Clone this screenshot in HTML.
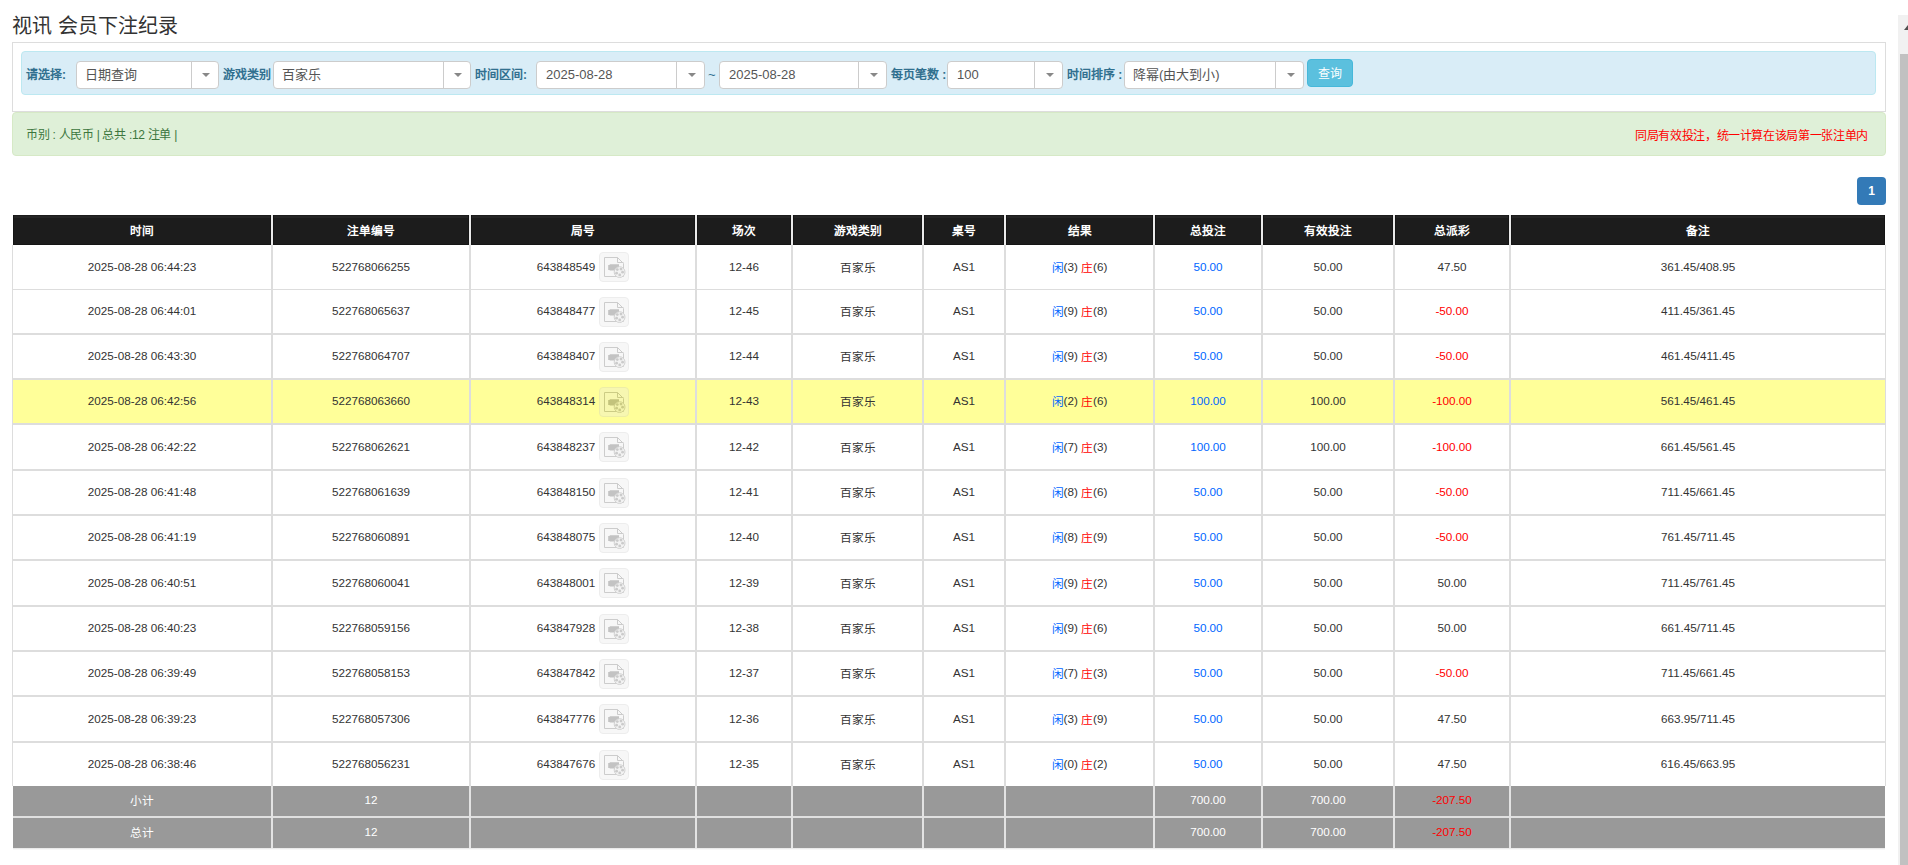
<!DOCTYPE html><html lang="zh-CN"><head><meta charset="utf-8"><style>
*{box-sizing:border-box}
html,body{margin:0;padding:0;background:#fff;width:1908px;height:865px;overflow:hidden;position:relative}
body{font-family:"Liberation Sans", sans-serif;color:#333}
.a{position:absolute}
.c{position:absolute;display:flex;align-items:center;justify-content:center;padding-bottom:2px;white-space:nowrap;font-size:11.7px;color:#333}
.sel{position:absolute;top:61px;height:28px;background:#fff;border:1px solid #ccc;border-radius:4px}
.sel .t{position:absolute;left:8px;top:0;line-height:26px;font-size:13px;color:#555;white-space:nowrap}
.sel .d{position:absolute;top:0;bottom:0;width:1px;background:#ccc}
.sel .ar{position:absolute;top:11px;width:0;height:0;border-left:4px solid transparent;border-right:4px solid transparent;border-top:4.5px solid #888}
.lb{position:absolute;top:61px;line-height:28px;font-size:12px;font-weight:bold;color:#31708f;white-space:nowrap}
.hl{position:absolute;background:#ddd}
.vl{position:absolute;width:2px;background:#ddd}
.ib{display:inline-block;width:30px;height:30px;margin-left:4px;position:relative;opacity:0.3;margin-top:2px}
.ib .bx{position:absolute;left:0;top:0;width:30px;height:30px;border:1px solid #c4c4c4;border-radius:4px;background:#e8e8e8}
.ib svg{position:absolute;left:0;top:0}
.blue{color:#0066ff}.red{color:#ff0000}

</style></head><body>
<div class="a" style="left:12px;top:13px;font-size:20px;line-height:26px;color:#333;white-space:nowrap">视讯 会员下注纪录</div>
<div class="a" style="left:12px;top:42px;width:1874px;height:70px;border:1px solid #ddd;background:#fff"></div>
<div class="a" style="left:21px;top:51px;width:1855px;height:44px;background:#d9edf7;border:1px solid #bce8f1;border-radius:4px"></div>
<div class="lb" style="left:26px">请选择:</div>
<div class="sel" style="left:76px;width:143px"><div class="t" style="left:8px">日期查询</div><div class="d" style="left:114px"></div><div class="ar" style="left:125px"></div></div>
<div class="lb" style="left:223px">游戏类别</div>
<div class="sel" style="left:273px;width:198px"><div class="t" style="left:8px">百家乐</div><div class="d" style="left:169px"></div><div class="ar" style="left:180px"></div></div>
<div class="lb" style="left:475px">时间区间:</div>
<div class="sel" style="left:536px;width:169px"><div class="t" style="left:9px">2025-08-28</div><div class="d" style="left:139px"></div><div class="ar" style="left:151px"></div></div>
<div class="a" style="left:708px;top:61px;line-height:28px;font-size:13px;color:#31708f">~</div>
<div class="sel" style="left:719px;width:168px"><div class="t" style="left:9px">2025-08-28</div><div class="d" style="left:138px"></div><div class="ar" style="left:150px"></div></div>
<div class="lb" style="left:891px">每页笔数 :</div>
<div class="sel" style="left:947px;width:116px"><div class="t" style="left:9px">100</div><div class="d" style="left:86px"></div><div class="ar" style="left:98px"></div></div>
<div class="lb" style="left:1067px">时间排序 :</div>
<div class="sel" style="left:1124px;width:180px"><div class="t" style="left:8px">降幂(由大到小)</div><div class="d" style="left:150px"></div><div class="ar" style="left:162px"></div></div>
<div class="a" style="left:1307px;top:59px;width:46px;height:28px;background:#5bc0de;border:1px solid #46b8da;border-radius:4px;color:#fff;font-size:12px;line-height:28px;text-align:center">查询</div>
<div class="a" style="left:12px;top:112px;width:1874px;height:44px;background:#dff0d8;border:1px solid #d6e9c6;border-radius:4px"></div>
<div class="a" style="left:26px;top:113px;line-height:44px;font-size:12px;letter-spacing:-0.3px;color:#3c763d;white-space:nowrap">币别 : 人民币 | 总共 :12 注单 |</div>
<div class="a" style="right:40px;top:114px;line-height:44px;font-size:12px;letter-spacing:-0.35px;color:#ff0000;white-space:nowrap">同局有效投注，统一计算在该局第一张注单内</div>
<div class="a" style="left:1857px;top:177px;width:29px;height:28px;background:#337ab7;border-radius:4px;color:#fff;font-size:12px;font-weight:bold;line-height:28px;text-align:center">1</div>
<div class="a" style="left:13px;top:215px;width:1872px;height:30px;background:#1c1c1c"></div>
<div class="a" style="left:13px;top:215px;width:1872px;height:30px;border:1px solid #151515;border-top:0"></div>
<div class="a" style="left:14px;top:216px;width:1870px;height:2px;background:#252525"></div>
<div class="c" style="left:13px;top:215px;width:258px;height:30px;color:#fff;font-weight:bold">时间</div>
<div class="c" style="left:273px;top:215px;width:196px;height:30px;color:#fff;font-weight:bold">注单编号</div>
<div class="c" style="left:471px;top:215px;width:224px;height:30px;color:#fff;font-weight:bold">局号</div>
<div class="c" style="left:697px;top:215px;width:94px;height:30px;color:#fff;font-weight:bold">场次</div>
<div class="c" style="left:793px;top:215px;width:129px;height:30px;color:#fff;font-weight:bold">游戏类别</div>
<div class="c" style="left:924px;top:215px;width:80px;height:30px;color:#fff;font-weight:bold">桌号</div>
<div class="c" style="left:1006px;top:215px;width:147px;height:30px;color:#fff;font-weight:bold">结果</div>
<div class="c" style="left:1155px;top:215px;width:106px;height:30px;color:#fff;font-weight:bold">总投注</div>
<div class="c" style="left:1263px;top:215px;width:130px;height:30px;color:#fff;font-weight:bold">有效投注</div>
<div class="c" style="left:1395px;top:215px;width:114px;height:30px;color:#fff;font-weight:bold">总派彩</div>
<div class="c" style="left:1511px;top:215px;width:374px;height:30px;color:#fff;font-weight:bold">备注</div>
<div class="a" style="left:270px;top:215px;width:4px;height:30px;border-left:1px solid #151515;border-right:1px solid #151515"></div>
<div class="a" style="left:271px;top:215px;width:2px;height:30px;background:#eaeaea"></div>
<div class="a" style="left:468px;top:215px;width:4px;height:30px;border-left:1px solid #151515;border-right:1px solid #151515"></div>
<div class="a" style="left:469px;top:215px;width:2px;height:30px;background:#eaeaea"></div>
<div class="a" style="left:694px;top:215px;width:4px;height:30px;border-left:1px solid #151515;border-right:1px solid #151515"></div>
<div class="a" style="left:695px;top:215px;width:2px;height:30px;background:#eaeaea"></div>
<div class="a" style="left:790px;top:215px;width:4px;height:30px;border-left:1px solid #151515;border-right:1px solid #151515"></div>
<div class="a" style="left:791px;top:215px;width:2px;height:30px;background:#eaeaea"></div>
<div class="a" style="left:921px;top:215px;width:4px;height:30px;border-left:1px solid #151515;border-right:1px solid #151515"></div>
<div class="a" style="left:922px;top:215px;width:2px;height:30px;background:#eaeaea"></div>
<div class="a" style="left:1003px;top:215px;width:4px;height:30px;border-left:1px solid #151515;border-right:1px solid #151515"></div>
<div class="a" style="left:1004px;top:215px;width:2px;height:30px;background:#eaeaea"></div>
<div class="a" style="left:1152px;top:215px;width:4px;height:30px;border-left:1px solid #151515;border-right:1px solid #151515"></div>
<div class="a" style="left:1153px;top:215px;width:2px;height:30px;background:#eaeaea"></div>
<div class="a" style="left:1260px;top:215px;width:4px;height:30px;border-left:1px solid #151515;border-right:1px solid #151515"></div>
<div class="a" style="left:1261px;top:215px;width:2px;height:30px;background:#eaeaea"></div>
<div class="a" style="left:1392px;top:215px;width:4px;height:30px;border-left:1px solid #151515;border-right:1px solid #151515"></div>
<div class="a" style="left:1393px;top:215px;width:2px;height:30px;background:#eaeaea"></div>
<div class="a" style="left:1508px;top:215px;width:4px;height:30px;border-left:1px solid #151515;border-right:1px solid #151515"></div>
<div class="a" style="left:1509px;top:215px;width:2px;height:30px;background:#eaeaea"></div>
<div class="a" style="left:13px;top:245px;width:1872px;height:44px;background:#fff"></div>
<div class="c" style="left:13px;top:245px;width:258px;height:44px">2025-08-28 06:44:23</div>
<div class="c" style="left:273px;top:245px;width:196px;height:44px">522768066255</div>
<div class="c" style="left:471px;top:245px;width:224px;height:44px">643848549<span class="ib"><span class="bx"></span><svg width="30" height="30" viewBox="0 0 30 30"><path d="M5.5 5.5H18.5L24.5 11.5V24.5H5.5Z" fill="#e6e6e6" stroke="#5a5a5a" stroke-width="1"/><path d="M18.5 5.5V10.5H24.5" fill="none" stroke="#5a5a5a"/><path d="M9.2 13H10.7V12.2H20V18.5H10.7V18.1H9.2Z" fill="#3c3c3c"/><circle cx="20.6" cy="20.1" r="5.4" fill="#d8d8d8" stroke="#6a6a6a" stroke-width="1"/><circle cx="18.3" cy="17.6" r="1.4" fill="#555"/><circle cx="22.0" cy="17.1" r="1.4" fill="#555"/><circle cx="23.6" cy="20.2" r="1.4" fill="#555"/><circle cx="20.7" cy="22.9" r="1.4" fill="#555"/><circle cx="17.6" cy="21.2" r="1.4" fill="#555"/></svg></span></div>
<div class="c" style="left:697px;top:245px;width:94px;height:44px">12-46</div>
<div class="c" style="left:793px;top:245px;width:129px;height:44px">百家乐</div>
<div class="c" style="left:924px;top:245px;width:80px;height:44px">AS1</div>
<div class="c" style="left:1006px;top:245px;width:147px;height:44px"><span class="blue">闲</span>(3)&nbsp;<span class="red">庄</span>(6)</div>
<div class="c" style="left:1155px;top:245px;width:106px;height:44px"><span class="blue">50.00</span></div>
<div class="c" style="left:1263px;top:245px;width:130px;height:44px">50.00</div>
<div class="c" style="left:1395px;top:245px;width:114px;height:44px">47.50</div>
<div class="c" style="left:1511px;top:245px;width:374px;height:44px">361.45/408.95</div>
<div class="a" style="left:13px;top:290px;width:1872px;height:43px;background:#fff"></div>
<div class="c" style="left:13px;top:290px;width:258px;height:43px">2025-08-28 06:44:01</div>
<div class="c" style="left:273px;top:290px;width:196px;height:43px">522768065637</div>
<div class="c" style="left:471px;top:290px;width:224px;height:43px">643848477<span class="ib"><span class="bx"></span><svg width="30" height="30" viewBox="0 0 30 30"><path d="M5.5 5.5H18.5L24.5 11.5V24.5H5.5Z" fill="#e6e6e6" stroke="#5a5a5a" stroke-width="1"/><path d="M18.5 5.5V10.5H24.5" fill="none" stroke="#5a5a5a"/><path d="M9.2 13H10.7V12.2H20V18.5H10.7V18.1H9.2Z" fill="#3c3c3c"/><circle cx="20.6" cy="20.1" r="5.4" fill="#d8d8d8" stroke="#6a6a6a" stroke-width="1"/><circle cx="18.3" cy="17.6" r="1.4" fill="#555"/><circle cx="22.0" cy="17.1" r="1.4" fill="#555"/><circle cx="23.6" cy="20.2" r="1.4" fill="#555"/><circle cx="20.7" cy="22.9" r="1.4" fill="#555"/><circle cx="17.6" cy="21.2" r="1.4" fill="#555"/></svg></span></div>
<div class="c" style="left:697px;top:290px;width:94px;height:43px">12-45</div>
<div class="c" style="left:793px;top:290px;width:129px;height:43px">百家乐</div>
<div class="c" style="left:924px;top:290px;width:80px;height:43px">AS1</div>
<div class="c" style="left:1006px;top:290px;width:147px;height:43px"><span class="blue">闲</span>(9)&nbsp;<span class="red">庄</span>(8)</div>
<div class="c" style="left:1155px;top:290px;width:106px;height:43px"><span class="blue">50.00</span></div>
<div class="c" style="left:1263px;top:290px;width:130px;height:43px">50.00</div>
<div class="c" style="left:1395px;top:290px;width:114px;height:43px"><span class="red">-50.00</span></div>
<div class="c" style="left:1511px;top:290px;width:374px;height:43px">411.45/361.45</div>
<div class="a" style="left:13px;top:335px;width:1872px;height:43px;background:#fff"></div>
<div class="c" style="left:13px;top:335px;width:258px;height:43px">2025-08-28 06:43:30</div>
<div class="c" style="left:273px;top:335px;width:196px;height:43px">522768064707</div>
<div class="c" style="left:471px;top:335px;width:224px;height:43px">643848407<span class="ib"><span class="bx"></span><svg width="30" height="30" viewBox="0 0 30 30"><path d="M5.5 5.5H18.5L24.5 11.5V24.5H5.5Z" fill="#e6e6e6" stroke="#5a5a5a" stroke-width="1"/><path d="M18.5 5.5V10.5H24.5" fill="none" stroke="#5a5a5a"/><path d="M9.2 13H10.7V12.2H20V18.5H10.7V18.1H9.2Z" fill="#3c3c3c"/><circle cx="20.6" cy="20.1" r="5.4" fill="#d8d8d8" stroke="#6a6a6a" stroke-width="1"/><circle cx="18.3" cy="17.6" r="1.4" fill="#555"/><circle cx="22.0" cy="17.1" r="1.4" fill="#555"/><circle cx="23.6" cy="20.2" r="1.4" fill="#555"/><circle cx="20.7" cy="22.9" r="1.4" fill="#555"/><circle cx="17.6" cy="21.2" r="1.4" fill="#555"/></svg></span></div>
<div class="c" style="left:697px;top:335px;width:94px;height:43px">12-44</div>
<div class="c" style="left:793px;top:335px;width:129px;height:43px">百家乐</div>
<div class="c" style="left:924px;top:335px;width:80px;height:43px">AS1</div>
<div class="c" style="left:1006px;top:335px;width:147px;height:43px"><span class="blue">闲</span>(9)&nbsp;<span class="red">庄</span>(3)</div>
<div class="c" style="left:1155px;top:335px;width:106px;height:43px"><span class="blue">50.00</span></div>
<div class="c" style="left:1263px;top:335px;width:130px;height:43px">50.00</div>
<div class="c" style="left:1395px;top:335px;width:114px;height:43px"><span class="red">-50.00</span></div>
<div class="c" style="left:1511px;top:335px;width:374px;height:43px">461.45/411.45</div>
<div class="a" style="left:13px;top:380px;width:1872px;height:43px;background:#ffff99"></div>
<div class="c" style="left:13px;top:380px;width:258px;height:43px">2025-08-28 06:42:56</div>
<div class="c" style="left:273px;top:380px;width:196px;height:43px">522768063660</div>
<div class="c" style="left:471px;top:380px;width:224px;height:43px">643848314<span class="ib"><span class="bx"></span><svg width="30" height="30" viewBox="0 0 30 30"><path d="M5.5 5.5H18.5L24.5 11.5V24.5H5.5Z" fill="#e6e6e6" stroke="#5a5a5a" stroke-width="1"/><path d="M18.5 5.5V10.5H24.5" fill="none" stroke="#5a5a5a"/><path d="M9.2 13H10.7V12.2H20V18.5H10.7V18.1H9.2Z" fill="#3c3c3c"/><circle cx="20.6" cy="20.1" r="5.4" fill="#d8d8d8" stroke="#6a6a6a" stroke-width="1"/><circle cx="18.3" cy="17.6" r="1.4" fill="#555"/><circle cx="22.0" cy="17.1" r="1.4" fill="#555"/><circle cx="23.6" cy="20.2" r="1.4" fill="#555"/><circle cx="20.7" cy="22.9" r="1.4" fill="#555"/><circle cx="17.6" cy="21.2" r="1.4" fill="#555"/></svg></span></div>
<div class="c" style="left:697px;top:380px;width:94px;height:43px">12-43</div>
<div class="c" style="left:793px;top:380px;width:129px;height:43px">百家乐</div>
<div class="c" style="left:924px;top:380px;width:80px;height:43px">AS1</div>
<div class="c" style="left:1006px;top:380px;width:147px;height:43px"><span class="blue">闲</span>(2)&nbsp;<span class="red">庄</span>(6)</div>
<div class="c" style="left:1155px;top:380px;width:106px;height:43px"><span class="blue">100.00</span></div>
<div class="c" style="left:1263px;top:380px;width:130px;height:43px">100.00</div>
<div class="c" style="left:1395px;top:380px;width:114px;height:43px"><span class="red">-100.00</span></div>
<div class="c" style="left:1511px;top:380px;width:374px;height:43px">561.45/461.45</div>
<div class="a" style="left:13px;top:425px;width:1872px;height:44px;background:#fff"></div>
<div class="c" style="left:13px;top:425px;width:258px;height:44px">2025-08-28 06:42:22</div>
<div class="c" style="left:273px;top:425px;width:196px;height:44px">522768062621</div>
<div class="c" style="left:471px;top:425px;width:224px;height:44px">643848237<span class="ib"><span class="bx"></span><svg width="30" height="30" viewBox="0 0 30 30"><path d="M5.5 5.5H18.5L24.5 11.5V24.5H5.5Z" fill="#e6e6e6" stroke="#5a5a5a" stroke-width="1"/><path d="M18.5 5.5V10.5H24.5" fill="none" stroke="#5a5a5a"/><path d="M9.2 13H10.7V12.2H20V18.5H10.7V18.1H9.2Z" fill="#3c3c3c"/><circle cx="20.6" cy="20.1" r="5.4" fill="#d8d8d8" stroke="#6a6a6a" stroke-width="1"/><circle cx="18.3" cy="17.6" r="1.4" fill="#555"/><circle cx="22.0" cy="17.1" r="1.4" fill="#555"/><circle cx="23.6" cy="20.2" r="1.4" fill="#555"/><circle cx="20.7" cy="22.9" r="1.4" fill="#555"/><circle cx="17.6" cy="21.2" r="1.4" fill="#555"/></svg></span></div>
<div class="c" style="left:697px;top:425px;width:94px;height:44px">12-42</div>
<div class="c" style="left:793px;top:425px;width:129px;height:44px">百家乐</div>
<div class="c" style="left:924px;top:425px;width:80px;height:44px">AS1</div>
<div class="c" style="left:1006px;top:425px;width:147px;height:44px"><span class="blue">闲</span>(7)&nbsp;<span class="red">庄</span>(3)</div>
<div class="c" style="left:1155px;top:425px;width:106px;height:44px"><span class="blue">100.00</span></div>
<div class="c" style="left:1263px;top:425px;width:130px;height:44px">100.00</div>
<div class="c" style="left:1395px;top:425px;width:114px;height:44px"><span class="red">-100.00</span></div>
<div class="c" style="left:1511px;top:425px;width:374px;height:44px">661.45/561.45</div>
<div class="a" style="left:13px;top:471px;width:1872px;height:43px;background:#fff"></div>
<div class="c" style="left:13px;top:471px;width:258px;height:43px">2025-08-28 06:41:48</div>
<div class="c" style="left:273px;top:471px;width:196px;height:43px">522768061639</div>
<div class="c" style="left:471px;top:471px;width:224px;height:43px">643848150<span class="ib"><span class="bx"></span><svg width="30" height="30" viewBox="0 0 30 30"><path d="M5.5 5.5H18.5L24.5 11.5V24.5H5.5Z" fill="#e6e6e6" stroke="#5a5a5a" stroke-width="1"/><path d="M18.5 5.5V10.5H24.5" fill="none" stroke="#5a5a5a"/><path d="M9.2 13H10.7V12.2H20V18.5H10.7V18.1H9.2Z" fill="#3c3c3c"/><circle cx="20.6" cy="20.1" r="5.4" fill="#d8d8d8" stroke="#6a6a6a" stroke-width="1"/><circle cx="18.3" cy="17.6" r="1.4" fill="#555"/><circle cx="22.0" cy="17.1" r="1.4" fill="#555"/><circle cx="23.6" cy="20.2" r="1.4" fill="#555"/><circle cx="20.7" cy="22.9" r="1.4" fill="#555"/><circle cx="17.6" cy="21.2" r="1.4" fill="#555"/></svg></span></div>
<div class="c" style="left:697px;top:471px;width:94px;height:43px">12-41</div>
<div class="c" style="left:793px;top:471px;width:129px;height:43px">百家乐</div>
<div class="c" style="left:924px;top:471px;width:80px;height:43px">AS1</div>
<div class="c" style="left:1006px;top:471px;width:147px;height:43px"><span class="blue">闲</span>(8)&nbsp;<span class="red">庄</span>(6)</div>
<div class="c" style="left:1155px;top:471px;width:106px;height:43px"><span class="blue">50.00</span></div>
<div class="c" style="left:1263px;top:471px;width:130px;height:43px">50.00</div>
<div class="c" style="left:1395px;top:471px;width:114px;height:43px"><span class="red">-50.00</span></div>
<div class="c" style="left:1511px;top:471px;width:374px;height:43px">711.45/661.45</div>
<div class="a" style="left:13px;top:516px;width:1872px;height:43px;background:#fff"></div>
<div class="c" style="left:13px;top:516px;width:258px;height:43px">2025-08-28 06:41:19</div>
<div class="c" style="left:273px;top:516px;width:196px;height:43px">522768060891</div>
<div class="c" style="left:471px;top:516px;width:224px;height:43px">643848075<span class="ib"><span class="bx"></span><svg width="30" height="30" viewBox="0 0 30 30"><path d="M5.5 5.5H18.5L24.5 11.5V24.5H5.5Z" fill="#e6e6e6" stroke="#5a5a5a" stroke-width="1"/><path d="M18.5 5.5V10.5H24.5" fill="none" stroke="#5a5a5a"/><path d="M9.2 13H10.7V12.2H20V18.5H10.7V18.1H9.2Z" fill="#3c3c3c"/><circle cx="20.6" cy="20.1" r="5.4" fill="#d8d8d8" stroke="#6a6a6a" stroke-width="1"/><circle cx="18.3" cy="17.6" r="1.4" fill="#555"/><circle cx="22.0" cy="17.1" r="1.4" fill="#555"/><circle cx="23.6" cy="20.2" r="1.4" fill="#555"/><circle cx="20.7" cy="22.9" r="1.4" fill="#555"/><circle cx="17.6" cy="21.2" r="1.4" fill="#555"/></svg></span></div>
<div class="c" style="left:697px;top:516px;width:94px;height:43px">12-40</div>
<div class="c" style="left:793px;top:516px;width:129px;height:43px">百家乐</div>
<div class="c" style="left:924px;top:516px;width:80px;height:43px">AS1</div>
<div class="c" style="left:1006px;top:516px;width:147px;height:43px"><span class="blue">闲</span>(8)&nbsp;<span class="red">庄</span>(9)</div>
<div class="c" style="left:1155px;top:516px;width:106px;height:43px"><span class="blue">50.00</span></div>
<div class="c" style="left:1263px;top:516px;width:130px;height:43px">50.00</div>
<div class="c" style="left:1395px;top:516px;width:114px;height:43px"><span class="red">-50.00</span></div>
<div class="c" style="left:1511px;top:516px;width:374px;height:43px">761.45/711.45</div>
<div class="a" style="left:13px;top:561px;width:1872px;height:44px;background:#fff"></div>
<div class="c" style="left:13px;top:561px;width:258px;height:44px">2025-08-28 06:40:51</div>
<div class="c" style="left:273px;top:561px;width:196px;height:44px">522768060041</div>
<div class="c" style="left:471px;top:561px;width:224px;height:44px">643848001<span class="ib"><span class="bx"></span><svg width="30" height="30" viewBox="0 0 30 30"><path d="M5.5 5.5H18.5L24.5 11.5V24.5H5.5Z" fill="#e6e6e6" stroke="#5a5a5a" stroke-width="1"/><path d="M18.5 5.5V10.5H24.5" fill="none" stroke="#5a5a5a"/><path d="M9.2 13H10.7V12.2H20V18.5H10.7V18.1H9.2Z" fill="#3c3c3c"/><circle cx="20.6" cy="20.1" r="5.4" fill="#d8d8d8" stroke="#6a6a6a" stroke-width="1"/><circle cx="18.3" cy="17.6" r="1.4" fill="#555"/><circle cx="22.0" cy="17.1" r="1.4" fill="#555"/><circle cx="23.6" cy="20.2" r="1.4" fill="#555"/><circle cx="20.7" cy="22.9" r="1.4" fill="#555"/><circle cx="17.6" cy="21.2" r="1.4" fill="#555"/></svg></span></div>
<div class="c" style="left:697px;top:561px;width:94px;height:44px">12-39</div>
<div class="c" style="left:793px;top:561px;width:129px;height:44px">百家乐</div>
<div class="c" style="left:924px;top:561px;width:80px;height:44px">AS1</div>
<div class="c" style="left:1006px;top:561px;width:147px;height:44px"><span class="blue">闲</span>(9)&nbsp;<span class="red">庄</span>(2)</div>
<div class="c" style="left:1155px;top:561px;width:106px;height:44px"><span class="blue">50.00</span></div>
<div class="c" style="left:1263px;top:561px;width:130px;height:44px">50.00</div>
<div class="c" style="left:1395px;top:561px;width:114px;height:44px">50.00</div>
<div class="c" style="left:1511px;top:561px;width:374px;height:44px">711.45/761.45</div>
<div class="a" style="left:13px;top:607px;width:1872px;height:43px;background:#fff"></div>
<div class="c" style="left:13px;top:607px;width:258px;height:43px">2025-08-28 06:40:23</div>
<div class="c" style="left:273px;top:607px;width:196px;height:43px">522768059156</div>
<div class="c" style="left:471px;top:607px;width:224px;height:43px">643847928<span class="ib"><span class="bx"></span><svg width="30" height="30" viewBox="0 0 30 30"><path d="M5.5 5.5H18.5L24.5 11.5V24.5H5.5Z" fill="#e6e6e6" stroke="#5a5a5a" stroke-width="1"/><path d="M18.5 5.5V10.5H24.5" fill="none" stroke="#5a5a5a"/><path d="M9.2 13H10.7V12.2H20V18.5H10.7V18.1H9.2Z" fill="#3c3c3c"/><circle cx="20.6" cy="20.1" r="5.4" fill="#d8d8d8" stroke="#6a6a6a" stroke-width="1"/><circle cx="18.3" cy="17.6" r="1.4" fill="#555"/><circle cx="22.0" cy="17.1" r="1.4" fill="#555"/><circle cx="23.6" cy="20.2" r="1.4" fill="#555"/><circle cx="20.7" cy="22.9" r="1.4" fill="#555"/><circle cx="17.6" cy="21.2" r="1.4" fill="#555"/></svg></span></div>
<div class="c" style="left:697px;top:607px;width:94px;height:43px">12-38</div>
<div class="c" style="left:793px;top:607px;width:129px;height:43px">百家乐</div>
<div class="c" style="left:924px;top:607px;width:80px;height:43px">AS1</div>
<div class="c" style="left:1006px;top:607px;width:147px;height:43px"><span class="blue">闲</span>(9)&nbsp;<span class="red">庄</span>(6)</div>
<div class="c" style="left:1155px;top:607px;width:106px;height:43px"><span class="blue">50.00</span></div>
<div class="c" style="left:1263px;top:607px;width:130px;height:43px">50.00</div>
<div class="c" style="left:1395px;top:607px;width:114px;height:43px">50.00</div>
<div class="c" style="left:1511px;top:607px;width:374px;height:43px">661.45/711.45</div>
<div class="a" style="left:13px;top:652px;width:1872px;height:43px;background:#fff"></div>
<div class="c" style="left:13px;top:652px;width:258px;height:43px">2025-08-28 06:39:49</div>
<div class="c" style="left:273px;top:652px;width:196px;height:43px">522768058153</div>
<div class="c" style="left:471px;top:652px;width:224px;height:43px">643847842<span class="ib"><span class="bx"></span><svg width="30" height="30" viewBox="0 0 30 30"><path d="M5.5 5.5H18.5L24.5 11.5V24.5H5.5Z" fill="#e6e6e6" stroke="#5a5a5a" stroke-width="1"/><path d="M18.5 5.5V10.5H24.5" fill="none" stroke="#5a5a5a"/><path d="M9.2 13H10.7V12.2H20V18.5H10.7V18.1H9.2Z" fill="#3c3c3c"/><circle cx="20.6" cy="20.1" r="5.4" fill="#d8d8d8" stroke="#6a6a6a" stroke-width="1"/><circle cx="18.3" cy="17.6" r="1.4" fill="#555"/><circle cx="22.0" cy="17.1" r="1.4" fill="#555"/><circle cx="23.6" cy="20.2" r="1.4" fill="#555"/><circle cx="20.7" cy="22.9" r="1.4" fill="#555"/><circle cx="17.6" cy="21.2" r="1.4" fill="#555"/></svg></span></div>
<div class="c" style="left:697px;top:652px;width:94px;height:43px">12-37</div>
<div class="c" style="left:793px;top:652px;width:129px;height:43px">百家乐</div>
<div class="c" style="left:924px;top:652px;width:80px;height:43px">AS1</div>
<div class="c" style="left:1006px;top:652px;width:147px;height:43px"><span class="blue">闲</span>(7)&nbsp;<span class="red">庄</span>(3)</div>
<div class="c" style="left:1155px;top:652px;width:106px;height:43px"><span class="blue">50.00</span></div>
<div class="c" style="left:1263px;top:652px;width:130px;height:43px">50.00</div>
<div class="c" style="left:1395px;top:652px;width:114px;height:43px"><span class="red">-50.00</span></div>
<div class="c" style="left:1511px;top:652px;width:374px;height:43px">711.45/661.45</div>
<div class="a" style="left:13px;top:697px;width:1872px;height:44px;background:#fff"></div>
<div class="c" style="left:13px;top:697px;width:258px;height:44px">2025-08-28 06:39:23</div>
<div class="c" style="left:273px;top:697px;width:196px;height:44px">522768057306</div>
<div class="c" style="left:471px;top:697px;width:224px;height:44px">643847776<span class="ib"><span class="bx"></span><svg width="30" height="30" viewBox="0 0 30 30"><path d="M5.5 5.5H18.5L24.5 11.5V24.5H5.5Z" fill="#e6e6e6" stroke="#5a5a5a" stroke-width="1"/><path d="M18.5 5.5V10.5H24.5" fill="none" stroke="#5a5a5a"/><path d="M9.2 13H10.7V12.2H20V18.5H10.7V18.1H9.2Z" fill="#3c3c3c"/><circle cx="20.6" cy="20.1" r="5.4" fill="#d8d8d8" stroke="#6a6a6a" stroke-width="1"/><circle cx="18.3" cy="17.6" r="1.4" fill="#555"/><circle cx="22.0" cy="17.1" r="1.4" fill="#555"/><circle cx="23.6" cy="20.2" r="1.4" fill="#555"/><circle cx="20.7" cy="22.9" r="1.4" fill="#555"/><circle cx="17.6" cy="21.2" r="1.4" fill="#555"/></svg></span></div>
<div class="c" style="left:697px;top:697px;width:94px;height:44px">12-36</div>
<div class="c" style="left:793px;top:697px;width:129px;height:44px">百家乐</div>
<div class="c" style="left:924px;top:697px;width:80px;height:44px">AS1</div>
<div class="c" style="left:1006px;top:697px;width:147px;height:44px"><span class="blue">闲</span>(3)&nbsp;<span class="red">庄</span>(9)</div>
<div class="c" style="left:1155px;top:697px;width:106px;height:44px"><span class="blue">50.00</span></div>
<div class="c" style="left:1263px;top:697px;width:130px;height:44px">50.00</div>
<div class="c" style="left:1395px;top:697px;width:114px;height:44px">47.50</div>
<div class="c" style="left:1511px;top:697px;width:374px;height:44px">663.95/711.45</div>
<div class="a" style="left:13px;top:743px;width:1872px;height:43px;background:#fff"></div>
<div class="c" style="left:13px;top:743px;width:258px;height:43px">2025-08-28 06:38:46</div>
<div class="c" style="left:273px;top:743px;width:196px;height:43px">522768056231</div>
<div class="c" style="left:471px;top:743px;width:224px;height:43px">643847676<span class="ib"><span class="bx"></span><svg width="30" height="30" viewBox="0 0 30 30"><path d="M5.5 5.5H18.5L24.5 11.5V24.5H5.5Z" fill="#e6e6e6" stroke="#5a5a5a" stroke-width="1"/><path d="M18.5 5.5V10.5H24.5" fill="none" stroke="#5a5a5a"/><path d="M9.2 13H10.7V12.2H20V18.5H10.7V18.1H9.2Z" fill="#3c3c3c"/><circle cx="20.6" cy="20.1" r="5.4" fill="#d8d8d8" stroke="#6a6a6a" stroke-width="1"/><circle cx="18.3" cy="17.6" r="1.4" fill="#555"/><circle cx="22.0" cy="17.1" r="1.4" fill="#555"/><circle cx="23.6" cy="20.2" r="1.4" fill="#555"/><circle cx="20.7" cy="22.9" r="1.4" fill="#555"/><circle cx="17.6" cy="21.2" r="1.4" fill="#555"/></svg></span></div>
<div class="c" style="left:697px;top:743px;width:94px;height:43px">12-35</div>
<div class="c" style="left:793px;top:743px;width:129px;height:43px">百家乐</div>
<div class="c" style="left:924px;top:743px;width:80px;height:43px">AS1</div>
<div class="c" style="left:1006px;top:743px;width:147px;height:43px"><span class="blue">闲</span>(0)&nbsp;<span class="red">庄</span>(2)</div>
<div class="c" style="left:1155px;top:743px;width:106px;height:43px"><span class="blue">50.00</span></div>
<div class="c" style="left:1263px;top:743px;width:130px;height:43px">50.00</div>
<div class="c" style="left:1395px;top:743px;width:114px;height:43px">47.50</div>
<div class="c" style="left:1511px;top:743px;width:374px;height:43px">616.45/663.95</div>
<div class="hl" style="left:13px;top:289px;width:1872px;height:1px"></div>
<div class="hl" style="left:13px;top:333px;width:1872px;height:2px"></div>
<div class="hl" style="left:13px;top:378px;width:1872px;height:2px"></div>
<div class="hl" style="left:13px;top:423px;width:1872px;height:2px"></div>
<div class="hl" style="left:13px;top:469px;width:1872px;height:2px"></div>
<div class="hl" style="left:13px;top:514px;width:1872px;height:2px"></div>
<div class="hl" style="left:13px;top:559px;width:1872px;height:2px"></div>
<div class="hl" style="left:13px;top:605px;width:1872px;height:2px"></div>
<div class="hl" style="left:13px;top:650px;width:1872px;height:2px"></div>
<div class="hl" style="left:13px;top:695px;width:1872px;height:2px"></div>
<div class="hl" style="left:13px;top:741px;width:1872px;height:2px"></div>
<div class="a" style="left:13px;top:786px;width:1872px;height:30px;background:#999"></div>
<div class="c" style="left:13px;top:786px;width:258px;height:30px;color:#fff;padding-bottom:3px">小计</div>
<div class="c" style="left:273px;top:786px;width:196px;height:30px;color:#fff;padding-bottom:3px">12</div>
<div class="c" style="left:1155px;top:786px;width:106px;height:30px;color:#fff;padding-bottom:3px">700.00</div>
<div class="c" style="left:1263px;top:786px;width:130px;height:30px;color:#fff;padding-bottom:3px">700.00</div>
<div class="c" style="left:1395px;top:786px;width:114px;height:30px;color:#ff0000;padding-bottom:3px">-207.50</div>
<div class="a" style="left:13px;top:818px;width:1872px;height:30px;background:#999"></div>
<div class="c" style="left:13px;top:818px;width:258px;height:30px;color:#fff;padding-bottom:3px">总计</div>
<div class="c" style="left:273px;top:818px;width:196px;height:30px;color:#fff;padding-bottom:3px">12</div>
<div class="c" style="left:1155px;top:818px;width:106px;height:30px;color:#fff;padding-bottom:3px">700.00</div>
<div class="c" style="left:1263px;top:818px;width:130px;height:30px;color:#fff;padding-bottom:3px">700.00</div>
<div class="c" style="left:1395px;top:818px;width:114px;height:30px;color:#ff0000;padding-bottom:3px">-207.50</div>
<div class="hl" style="left:13px;top:816px;width:1872px;height:2px;background:#e0e0e0"></div>
<div class="a" style="left:13px;top:848px;width:1872px;height:2px;background:linear-gradient(#e4e4e4,#fff)"></div>
<div class="a" style="left:12px;top:245px;width:1px;height:541px;background:#ddd"></div>
<div class="a" style="left:1885px;top:245px;width:1px;height:541px;background:#ddd"></div>
<div class="vl" style="left:271px;top:245px;height:541px"></div>
<div class="vl" style="left:271px;top:786px;height:62px;background:#e3e3e3"></div>
<div class="vl" style="left:469px;top:245px;height:541px"></div>
<div class="vl" style="left:469px;top:786px;height:62px;background:#e3e3e3"></div>
<div class="vl" style="left:695px;top:245px;height:541px"></div>
<div class="vl" style="left:695px;top:786px;height:62px;background:#e3e3e3"></div>
<div class="vl" style="left:791px;top:245px;height:541px"></div>
<div class="vl" style="left:791px;top:786px;height:62px;background:#e3e3e3"></div>
<div class="vl" style="left:922px;top:245px;height:541px"></div>
<div class="vl" style="left:922px;top:786px;height:62px;background:#e3e3e3"></div>
<div class="vl" style="left:1004px;top:245px;height:541px"></div>
<div class="vl" style="left:1004px;top:786px;height:62px;background:#e3e3e3"></div>
<div class="vl" style="left:1153px;top:245px;height:541px"></div>
<div class="vl" style="left:1153px;top:786px;height:62px;background:#e3e3e3"></div>
<div class="vl" style="left:1261px;top:245px;height:541px"></div>
<div class="vl" style="left:1261px;top:786px;height:62px;background:#e3e3e3"></div>
<div class="vl" style="left:1393px;top:245px;height:541px"></div>
<div class="vl" style="left:1393px;top:786px;height:62px;background:#e3e3e3"></div>
<div class="vl" style="left:1509px;top:245px;height:541px"></div>
<div class="vl" style="left:1509px;top:786px;height:62px;background:#e3e3e3"></div>
<div class="a" style="left:1898px;top:15px;width:10px;height:850px;background:#f1f1f1"></div>
<div class="a" style="left:1900px;top:54px;width:8px;height:811px;background:#c1c1c1"></div>
<div class="a" style="left:1904px;top:25px;width:0;height:0;border-left:4px solid transparent;border-right:4px solid transparent;border-bottom:5px solid #505050"></div>
</body></html>
